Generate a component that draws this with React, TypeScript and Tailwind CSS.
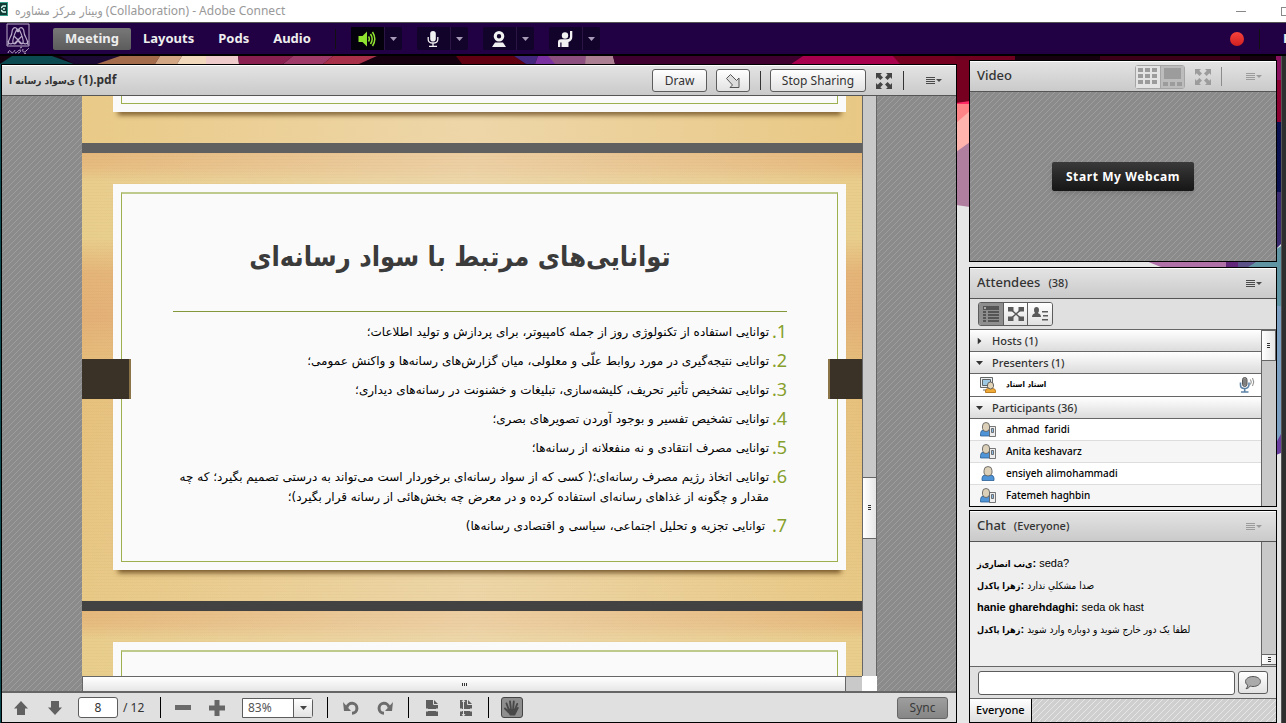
import React from 'react';
import clsx from 'clsx';

const STRIPES =
  'bg-[#8b8b8b] bg-[linear-gradient(135deg,transparent_4%,#9d9d9d_4%_12%,transparent_12%_54%,#9d9d9d_54%_62%,transparent_62%)] bg-size-[6px_6px]';
const HEADER = 'bg-linear-to-b from-[#e3e3e3] to-[#cacaca]';
const BUTTON =
  'flex items-center justify-center rounded-[3px] border border-[#5c5c5c] bg-linear-to-b from-white to-[#e2e2e2] text-[#333]';
const PERSIAN = "font-['DejaVu_Sans_Condensed','DejaVu_Sans',sans-serif]";

const points = [
  'توانایی استفاده از تکنولوژی روز از جمله کامپیوتر، برای پردازش و تولید اطلاعات؛',
  'توانایی نتیجه‌گیری در مورد روابط علّی و معلولی، میان گزارش‌های رسانه‌ها و واکنش عمومی؛',
  'توانایی تشخیص تأثیر تحریف، کلیشه‌سازی، تبلیغات و خشنونت در رسانه‌های دیداری؛',
  'توانایی تشخیص تفسیر و بوجود آوردن تصویرهای بصری؛',
  'توانایی مصرف انتقادی و نه منفعلانه از رسانه‌ها؛',
  'توانایی اتخاذ رژیم مصرف رسانه‌ای؛( کسی که از سواد رسانه‌ای برخوردار است می‌تواند به درستی تصمیم بگیرد؛ که چه\nمقدار و چگونه از غذاهای رسانه‌ای استفاده کرده و در معرض چه بخش‌هائی از رسانه قرار بگیرد)؛',
  ' توانایی تجزیه و تحلیل اجتماعی، سیاسی و اقتصادی رسانه‌ها)',
];

const participants = [
  { name: 'ahmad  faridi', mobile: true },
  { name: 'Anita keshavarz', mobile: true },
  { name: 'ensiyeh alimohammadi', mobile: false },
  { name: 'Fatemeh haghbin', mobile: true },
];

const messages = [
  { from: 'ی‌نب انصاری‌ز', text: 'seda?', persianName: true, persianText: false },
  { from: 'زهرا پاکدل', text: 'صدا مشکلي ندارد', persianName: true, persianText: true },
  { from: 'hanie gharehdaghi', text: 'seda ok hast', persianName: false, persianText: false },
  { from: 'زهرا پاکدل', text: 'لطفا یک دور خارج شوید و دوباره وارد شوید', persianName: true, persianText: true },
];

/* ---------- icons ---------- */

const Caret = ({ className }: { className?: string }) => (
  <svg viewBox="0 0 7 4" className={clsx('h-1 w-[7px]', className)} fill="currentColor" aria-hidden="true">
    <path d="M0 0h7L3.500 4z" />
  </svg>
);

const MenuLines = () => (
  <svg viewBox="0 0 16 8" className="h-2 w-4" fill="currentColor" aria-hidden="true" shapeRendering="crispEdges">
    <path d="M0 0h9v1H0zM0 2h9v1H0zM0 4h9v1H0zM0 6h9v1H0z" />
    <path d="M10 2h6l-3 3z" shapeRendering="auto" />
  </svg>
);

const Expand = () => (
  <svg viewBox="0 0 16 16" className="size-4" fill="currentColor" aria-hidden="true">
    <path d="M0 0h6L4.300 1.700 7 4.400 4.400 7 1.700 4.300 0 6zM16 0v6l-1.700-1.700L11.600 7 9 4.400l2.700-2.700L10 0zM0 16v-6l1.700 1.700L4.400 9 7 11.600l-2.700 2.700L6 16zM16 16h-6l1.700-1.700L9 11.600 11.600 9l2.700 2.700L16 10z" />
  </svg>
);

const Logo = () => (
  <svg viewBox="0 0 26 32" className="h-8 w-[26px]" fill="none" stroke="#b9abc9" strokeWidth="1.200" aria-hidden="true">
    <path d="M2 1h22v22H2z" strokeWidth="1" />
    <path d="M3 22c0-7 4-8 4-13 0-3 2-5 4-4s2 3 1 4M23 22c0-7-4-8-4-13 0-3-2-5-4-4s-2 3-1 4M12 6C9 12 7 16 8 20c2 2 4 0 5-3 1 3 3 5 5 3 1-4-1-8-4-14M8 20c-3 2-5 0-5-2M18 20c3 2 5 0 5-2M9 13l8 8M17 13l-8 8" />
    <path d="M3 30c1-3 2-3 3-1s3 0 4-2m0 3c2 0 3-3 5-3s0 3-2 3m5-4c-1 3 1 4 3 2s2-2 3-3M15 25l2-1M19 31l2-1" strokeWidth="1" />
  </svg>
);

const Speaker = () => (
  <svg viewBox="0 0 18 16" className="h-4 w-[18px]" fill="none" stroke="#8fe330" strokeWidth="1.500" aria-hidden="true">
    <path d="M.5 5h4L9 .5v15L4.500 11h-4z" fill="#8fe330" stroke="none" />
    <path d="M10.500 5.500q1.700 2.500 0 5M12.500 3q3.400 5 0 10M14.500 1q4.600 7 0 14" />
  </svg>
);

const Mic = () => (
  <svg viewBox="0 0 12 16" className="h-4 w-3" fill="none" stroke="#f1f1f1" strokeWidth="1.300" aria-hidden="true">
    <rect x="3.200" y="0" width="5.600" height="10.500" rx="2.800" fill="#f1f1f1" stroke="none" />
    <path d="M1.200 6v2.500q0 3.500 4.800 3.500t4.800-3.500V6M6 12v3M2 15.300h8" />
  </svg>
);

const Webcam = () => (
  <svg viewBox="0 0 14 16" className="h-4 w-3.5" fill="#f1f1f1" aria-hidden="true">
    <path fillRule="evenodd" d="M7 0a5.300 5.300 0 1 0 0 10.600A5.300 5.300 0 0 0 7 0m0 3.100a2.200 2.200 0 1 1 0 4.400 2.200 2.200 0 0 1 0-4.400" />
    <path d="M3 11.500h8l3 4.500H0z" />
  </svg>
);

const RaiseHand = () => (
  <svg viewBox="0 0 15 16" className="h-4 w-[15px]" fill="#f1f1f1" aria-hidden="true">
    <circle cx="7" cy="4.500" r="3.200" />
    <path d="M0 16v-5q0-2.800 3-2.800h6q2.800 0 3-2.200V0h2.300v6q0 3.500-3.800 5v5H3.500v-4.500H2.300V16z" />
  </svg>
);

const ArrowUp = ({ className }: { className?: string }) => (
  <svg viewBox="0 0 14 14" className={clsx('size-3.5', className)} fill="#616161" aria-hidden="true">
    <path d="M7 0l7 7.500h-3V14H3V7.500H0z" />
  </svg>
);

const Turn = ({ className }: { className?: string }) => (
  <svg viewBox="0 0 16 14" className={clsx('h-3.5 w-4', className)} fill="none" aria-hidden="true">
    <path d="M4 6.500A5 5 0 1 1 9 12.300" stroke="#6c6c6c" strokeWidth="3" />
    <path d="M0 1l1 9h7z" fill="#6c6c6c" />
  </svg>
);

const PageFit = ({ both }: { both?: boolean }) => (
  <svg viewBox="0 0 14 16" className="h-4 w-3.5" aria-hidden="true">
    <path d="M1 0h8l4 4v5H1zM1 11h12v5H1z" fill="#5e5e5e" />
    <path d="M8.500 0v4.500H13" fill="none" stroke="#e0e0e0" />
    <path d="M0 10h14M2.500 8L.5 10l2 2M11.500 8l2 2-2 2" fill="none" stroke="#e0e0e0" />
    {both && <path d="M4.500 0v16M3 2l1.500-2L6 2M3 14l1.500 2L6 14" fill="none" stroke="#e0e0e0" />}
  </svg>
);

const Hand = () => (
  <svg viewBox="0 0 16 16" className="size-4" fill="none" stroke="#484848" strokeLinecap="round" aria-hidden="true">
    <path d="M4.500 9L2.500 3.500M6.800 8L6 1.500M9.200 8l.6-6.500M11.200 9l2-5M4.500 12L1 8.500" strokeWidth="1.900" />
    <path d="M4 8.500h8l1.500-1.500 1.500.500-2.500 5-1.500 3H6L3 11z" fill="#484848" stroke="none" />
  </svg>
);

const Person = ({ mobile }: { mobile?: boolean }) => (
  <svg viewBox="0 0 16 16" className="size-4" stroke="#555" strokeWidth=".8" aria-hidden="true">
    {mobile ? (
      <>
        <path d="M.5 14v-2.500Q.5 8 4 8h4q2.500 0 2.500 3v3z" fill="#4f94d6" stroke="#2c5f96" />
        <path d="M2.500 4q0-3.500 3.500-3.500T9.500 4v2.500Q9 9.500 6 9.500T2.500 6.500z" fill="#dcd0b8" />
        <path d="M9.500 4.500h6v10h-6z" fill="#eee" />
        <path d="M11.500 6.500h2v4h-2z" fill="#8fbde6" />
      </>
    ) : (
      <>
        <path d="M2 14.500V12q0-3 4-3h4q4 0 4 3v2.500z" fill="#4f94d6" stroke="#2c5f96" />
        <path d="M4 4.500q0-4 4-4t4 4v2.500q-.5 3-4 3t-4-3z" fill="#dcd0b8" />
      </>
    )}
  </svg>
);

const Presenter = () => (
  <svg viewBox="0 0 16 16" className="size-4" stroke="#555" strokeWidth=".9" aria-hidden="true">
    <path d="M.5.500h12v10H.5z" fill="#e8eef2" />
    <path d="M2.500 2.500h8v6h-8z" fill="#9cc8e4" />
    <path d="M3 13h5" />
    <path d="M5.500 15.500V14q0-2.500 3-2.500h4q3 0 3 2.500v1.500z" fill="#f0aa38" stroke="#b57414" />
    <path d="M7.500 8q0-3 3-3t3 3v1.500q-.5 2.500-3 2.500t-3-2.500z" fill="#e3d4b8" />
  </svg>
);

const LiveMic = () => (
  <svg viewBox="0 0 16 16" className="size-4" fill="none" stroke="#555" aria-hidden="true">
    <path d="M1.500 5.500V8q0 3.500 4 3.500T10 8V5.500M5.700 11.500v3M2 15h7.500" stroke="#5b83a8" strokeWidth="1.600" />
    <rect x="3.500" y=".5" width="4.500" height="9" rx="2.200" fill="#999" />
    <path d="M4 3h3.500M4 5h3.500M4 7h3.500" strokeWidth=".7" />
    <path d="M11.500 2.500q1.500 2.500 0 5M13.500 1q2.500 4 0 8" stroke="#888" />
  </svg>
);

/* ---------- shared pieces ---------- */

const Divider = ({ className }: { className?: string }) => <span className={clsx('w-px', className)} />;

interface PodProps {
  title: React.ReactNode;
  actions?: React.ReactNode;
  className?: string;
  children: React.ReactNode;
}

const Pod = ({ title, actions, className, children }: PodProps) => (
  <section className={clsx('flex min-h-0 flex-col border border-black bg-[#e0e0e0]', className)}>
    <header className={clsx('flex h-[31px] shrink-0 items-center border-t border-b border-t-white border-b-[#555] pl-[7px] pr-3.5', HEADER)}>
      <h2 className="flex flex-1 items-center gap-2 whitespace-nowrap pb-px text-[13px] font-medium text-[#333]">{title}</h2>
      {actions}
    </header>
    {children}
  </section>
);

const PodMenu = ({ faded }: { faded?: boolean }) => (
  <button type="button" aria-label="Pod options" className={faded ? 'text-[#9c9c9c]' : 'text-[#4a4a4a]'}>
    <MenuLines />
  </button>
);

const Grip = ({ vertical }: { vertical?: boolean }) => (
  <span
    className={
      vertical
        ? 'h-[3px] w-[5px] bg-[repeating-linear-gradient(90deg,#333_0_1px,transparent_1px_2px)]'
        : 'h-[5px] w-[3px] bg-[repeating-linear-gradient(180deg,#333_0_1px,transparent_1px_2px)]'
    }
  />
);

const THUMB = 'flex items-center justify-center border border-[#666] bg-linear-to-r from-white to-[#e6e6e6]';

/* Faceted wallpaper that shows between the pods */
const Wallpaper = () => (
  <svg viewBox="0 0 1286 723" preserveAspectRatio="xMinYMin slice" className="absolute inset-0 size-full" aria-hidden="true">
    <path fill="#e6e6e6" d="M0 0h1286v723H0z" />
    <path fill="#14000f" d="M0 50h1286v14H0z" />
    <path fill="#0a4a50" d="M0 64l12-8h40l22 8v660H0z" />
    <path fill="#1c0a34" d="M60 56h60l-20 8H74z" />
    <path fill="#a56c4c" d="M120 56h40l-5 8H97z" />
    <path fill="#d3a684" d="M160 56h22l-5 8h-22z" />
    <path fill="#f3d9bb" d="M182 56h28l-4 8h-29z" />
    <path fill="#f0cbcb" d="M206 56h32l1 8h-33z" />
    <path fill="#8a2050" d="M238 56h55l-10 8h-44z" />
    <path fill="#a03a68" d="M293 56h40l-10 8h-40z" />
    <path fill="#a83048" d="M333 56h44l-18 8h-36z" />
    <path fill="#600010" d="M456 56h58l12 8h-64z" />
    <path fill="#43267e" d="M514 56h24l-3 8h-9z" />
    <path fill="#7a30a0" d="M538 56h20l20 8h-43z" />
    <path fill="#8c4f80" d="M548 56h40l-3 8h-30z" />
    <path fill="#ac8092" d="M586 56h27l2 8h-30z" />
    <path fill="#40002f" d="M613 56h190l-12 8H615z" />
    <path fill="#a8004c" d="M803 56h90l20 8H791z" />
    <path fill="#76001f" d="M893 56h76v52h-14v-44h-55z" />
    <path fill="#700020" d="M955 56h60v4h-60z" />
    <path fill="#3c0018" d="M1100 56h140v4h-140z" />
    <path fill="#ff2a63" d="M956 103l14-2v3l-14 4z" />
    <path fill="#ff8488" d="M956 104h14v9l-14 12z" />
    <path fill="#ffb3ac" d="M956 123l14-12v32l-8 8h-6z" />
    <path fill="#b07fa0" d="M956 152l14-10v65l-14-2z" />
    <path fill="#8a1060" d="M1276 56h5v40h-5z" />
    <path fill="#8a0030" d="M1276 80h5v43l-5-1z" />
    <path fill="#0a1050" d="M1276 122h5v70h-5z" />
    <path fill="#3a2a70" d="M1276 192h5v52l-5 5z" />
    <path fill="#b070a8" d="M1146 261h90v6h-75z" />
    <path fill="#62267a" d="M1226 261h12v6h-12z" />
    <path fill="#5c5088" d="M1238 261h20l-8 6h-12z" />
    <path fill="#5f95a3" d="M1258 261l23-15v60h-5v-39h-28z" />
    <path fill="#7a9fc0" d="M1276 306h5v130l-5 10z" />
    <path fill="#6a3fa0" d="M1276 443l5-9v19l-5 2z" />
  </svg>
);

const MenuItem = ({ label, active }: { label: string; active?: boolean }) => (
  <button
    type="button"
    className={clsx(
      'h-[22px] rounded-xs px-3 text-[13px] font-bold text-[#eee]',
      active && 'bg-linear-to-b from-[#787878] to-[#5c5c5c]'
    )}
  >
    {label}
  </button>
);

const DeviceButton = ({ label, dark, children }: { label: string; dark?: boolean; children: React.ReactNode }) => (
  <div className="flex h-[23px] w-[51px] rounded-xs bg-[#12032a]">
    <button type="button" aria-label={label} className={clsx('flex flex-1 items-center justify-center', dark && 'bg-[#05010c]')}>
      {children}
    </button>
    <button
      type="button"
      aria-label={`${label} options`}
      className="flex w-[18px] items-center justify-center border-l border-[#2b1545] text-[#a79bb8]"
    >
      <Caret />
    </button>
  </div>
);

interface SlideProps {
  part?: 'top' | 'bottom';
  className?: string;
  children?: React.ReactNode;
}

/* A wood-backed page; `part` shows only one cut edge of it */
const Slide = ({ part, className, children }: SlideProps) => (
  <div
    className={clsx(
      'relative flex flex-col pl-[31px] pr-4',
      part !== 'bottom' &&
        'bg-[repeating-linear-gradient(180deg,rgba(170,110,40,0.04)_0_1px,transparent_1px_3px),linear-gradient(90deg,transparent,rgba(240,222,190,0.6)_50%,transparent),linear-gradient(180deg,#e5b77b_0,#e6bc80_14px,#e8cd8c_28px,#e8ce8c_85px,#e4b477_120px,#e3b076_165px,#e6c07c_220px,#e8c986_100%)] pt-[31px]',
      part === 'bottom' && 'bg-[linear-gradient(90deg,#e9ca87,#eed6a9_50%,#e8c884)]',
      part !== 'top' && 'pb-[31px]',
      className
    )}
  >
    <div
      className={clsx(
        'flex flex-1 flex-col bg-[#fafafa] px-2',
        part !== 'bottom' && 'pt-2',
        part !== 'top' && 'pb-2 shadow-[0_8px_5px_-5px_rgba(80,50,10,0.75)]'
      )}
    >
      <div
        className={clsx(
          'flex-1 border-x border-[#9db04f]',
          part !== 'bottom' && 'border-t-2 border-t-[#bdca8c]',
          part !== 'top' && 'border-b'
        )}
      >
        {children}
      </div>
    </div>
  </div>
);

/* ---------- pods ---------- */

const SharePod = () => (
  <Pod
    className="mt-2 flex-1"
    title={
      <span className="text-xs font-bold">
        <bdi className={clsx(PERSIAN, 'text-[10px]')}>ی‌سواد رسانه ا</bdi> (1).pdf
      </span>
    }
    actions={
      <div className="flex items-center">
        <button type="button" className={clsx(BUTTON, 'h-[23px] w-[55px] text-xs')}>Draw</button>
        <button type="button" aria-label="Pointer" className={clsx(BUTTON, 'ml-[9px] h-[23px] w-[34px]')}>
          <svg viewBox="0 0 14 14" className="size-3.5" fill="#ddd" stroke="#555" strokeLinejoin="round" aria-hidden="true">
            <path d="M.5 4.500l4-4 6 6 2.500-2.500v9.500H4l2.500-2.500z" />
          </svg>
        </button>
        <Divider className="ml-2.5 h-[19px] bg-[#333]" />
        <button type="button" className={clsx(BUTTON, 'ml-[9px] h-[23px] w-24 text-xs')}>Stop Sharing</button>
        <button type="button" aria-label="Full screen" className="ml-2.5 text-[#444]"><Expand /></button>
        <Divider className="ml-[11px] mr-[22px] h-[19px] bg-[#333]" />
        <PodMenu />
      </div>
    }
  >
    <div className={clsx('flex min-h-0 flex-1 pl-20 pr-[79px]', STRIPES)}>
      <div className="flex min-w-0 flex-1 flex-col">
        <div className="flex min-h-0 flex-1 flex-col overflow-hidden bg-[#424242]">
          <Slide part="bottom">
            <div className="h-[7px]" />
          </Slide>
          <div className="h-2.5 shrink-0 bg-[#606060]" />
          <Slide className="mb-2.5">
            <div className="pl-[51px] pr-[50px] pb-[25px]">
              <h1
                dir="rtl"
                className={clsx(
                  'border-b border-[#84973a] pt-[33px] pr-10 pb-6 text-center text-[27px] leading-[60px] font-bold text-[#3b3b3b]',
                  PERSIAN
                )}
              >
                توانایی‌های مرتبط با سواد رسانه‌ای
              </h1>
              <ol dir="rtl" className="mt-2.5 flex flex-col gap-[9px] font-['DejaVu_Sans',sans-serif]">
                {points.map((point, i) => (
                  <li key={point} className="flex gap-0.5 text-xs leading-5 text-black">
                    <span className="w-4 font-['Noto_Sans',sans-serif] text-lg leading-[18px] text-[#86a02c]">
                      <bdi dir="ltr">.{i + 1}</bdi>
                    </span>
                    <span className="whitespace-pre">{point}</span>
                  </li>
                ))}
              </ol>
            </div>
            <span className="absolute top-[206px] left-0 h-10 w-[49px] border-r-2 border-[#8b7448] bg-[#3a3226]" />
            <span className="absolute top-[206px] right-0 h-10 w-[34px] border-l-2 border-[#8b7448] bg-[#3a3226]" />
          </Slide>
          <Slide part="top" className="flex-1" />
        </div>
        <div className="flex h-[15px] shrink-0 border-t border-[#666] bg-[#c9c9c9]">
          <span className="flex flex-1 items-center justify-center border-x border-[#666] bg-linear-to-b from-white to-[#e6e6e6]">
            <Grip vertical />
          </span>
          <span className="w-4" />
        </div>
      </div>
      <div className="flex w-[15px] flex-col">
        <div className="flex flex-1 flex-col border-x border-[#666] bg-[#c9c9c9]">
          <span className="flex-[382]" />
          <span className={clsx(THUMB, 'h-[62px] border-x-0')}><Grip /></span>
          <span className="flex-[138]" />
        </div>
        <span className="h-[15px] bg-white" />
      </div>
    </div>

    <div className="flex h-[31px] shrink-0 items-center border-t-2 border-[#666] pl-3 pr-2 text-xs text-[#333]">
      <button type="button" aria-label="Previous page"><ArrowUp /></button>
      <button type="button" aria-label="Next page" className="ml-5"><ArrowUp className="rotate-180" /></button>
      <input
        aria-label="Page"
        defaultValue="8"
        className="ml-4 h-[21px] w-10 rounded-[3px] border border-[#5c5c5c] bg-white text-center text-xs"
      />
      <span className="ml-[5px] w-[37px]">/ 12</span>
      <Divider className="h-[21px] bg-black" />
      <button type="button" aria-label="Zoom out" className="ml-3.5">
        <span className="block h-[5px] w-4 bg-[#6a6a6a]" />
      </button>
      <button type="button" aria-label="Zoom in" className="ml-[18px]">
        <svg viewBox="0 0 16 16" className="size-4" fill="#666" aria-hidden="true"><path d="M5.500 0h5v5.500H16v5h-5.500V16h-5v-5.500H0v-5h5.500z" /></svg>
      </button>
      <div className="relative ml-[17px] h-5 w-[71px]">
        <select aria-label="Zoom" className="size-full appearance-none rounded-r-[3px] border border-[#5c5c5c] bg-white pl-[5px] text-xs text-[#555]">
          <option>83%</option>
        </select>
        <span className="pointer-events-none absolute inset-y-px right-px flex w-[19px] items-center justify-center border-l border-[#5c5c5c] bg-linear-to-b from-white to-[#e2e2e2] text-[#444]">
          <Caret />
        </span>
      </div>
      <Divider className="ml-3.5 h-[21px] bg-black" />
      <button type="button" aria-label="Rotate left" className="ml-[15px]"><Turn /></button>
      <button type="button" aria-label="Rotate right" className="ml-[18px]"><Turn className="-scale-x-100" /></button>
      <Divider className="ml-[15px] h-[21px] bg-black" />
      <button type="button" aria-label="Fit width" className="ml-4"><PageFit /></button>
      <button type="button" aria-label="Fit page" className="ml-5"><PageFit both /></button>
      <Divider className="ml-[15px] h-[21px] bg-black" />
      <button type="button" aria-label="Pan" className="ml-3 flex h-[21px] w-[22px] items-center justify-center rounded-[3px] border border-[#444] bg-[#8e8e8e]">
        <Hand />
      </button>
      <button type="button" className="ml-auto h-[22px] w-[51px] rounded-[3px] border border-[#666] bg-linear-to-b from-[#9e9e9e] to-[#868686] text-xs text-[#3a3a3a]">
        Sync
      </button>
    </div>
  </Pod>
);

const VideoPod = () => (
  <Pod
    className="h-[202px] shrink-0"
    title="Video"
    actions={
      <div className="flex items-center text-[#9c9c9c]">
        <div className="flex h-6 w-[50px] rounded-[3px] border border-[#a5a5a5]">
          <button type="button" aria-label="Grid view" className="flex flex-1 items-center justify-center bg-[#e4e4e4]">
            <svg viewBox="0 0 19 17" className="h-[17px] w-[19px]" fill="currentColor" aria-hidden="true">
              <path d="M0 0h5v4H0zM7 0h5v4H7zM14 0h5v4h-5zM0 6h5v4H0zM7 6h5v4H7zM14 6h5v4h-5zM0 12h5v4H0zM7 12h5v4H7zM14 12h5v4h-5z" />
            </svg>
          </button>
          <button type="button" aria-label="Filmstrip view" className="flex flex-1 items-center justify-center border-l border-[#a5a5a5] bg-[#bcbcbc]">
            <svg viewBox="0 0 19 18" className="h-[18px] w-[19px]" fill="currentColor" aria-hidden="true">
              <path d="M1 0h17v11H1zM0 14h5v4H0zM7 14h5v4H7zM14 14h5v4h-5z" />
            </svg>
          </button>
        </div>
        <button type="button" aria-label="Full screen" className="ml-2.5"><Expand /></button>
        <Divider className="ml-2.5 mr-6 h-[19px] bg-[#8c8c8c]" />
        <PodMenu faded />
      </div>
    }
  >
    <div className={clsx('flex flex-1 items-center justify-center', STRIPES)}>
      <button type="button" className="h-[29px] rounded-xs bg-linear-to-b from-[#3a3a3a] to-[#161616] px-3.5 text-xs font-bold tracking-wider text-white shadow-md">
        Start My Webcam
      </button>
    </div>
  </Pod>
);

const GroupRow = ({ label, open }: { label: string; open?: boolean }) => (
  <h3 className="h-[22px] border-b border-[#666] bg-linear-to-b from-white to-[#dcdcdc]">
    <button type="button" className="flex size-full items-center gap-[9px] pt-px pl-1.5 text-[11px] font-medium text-[#333]">
      <Caret className={clsx(!open && '-rotate-90')} />
      {label}
    </button>
  </h3>
);

const AttendeesPod = () => (
  <Pod
    className="mt-[5px] h-60 shrink-0"
    title={<>Attendees <span className="text-[11px]">(38)</span></>}
    actions={<PodMenu />}
  >
    <div className="flex h-[31px] shrink-0 items-center border-b border-[#666] pl-2">
      <div className="flex h-6 w-[75px] divide-x divide-[#5c5c5c] overflow-hidden rounded-[3px] border border-[#5c5c5c]">
        <button type="button" aria-label="Attendee view" className="flex flex-1 items-center justify-center bg-[#8e8e8e]">
          <svg viewBox="0 0 16 16" className="size-4" fill="#555" shapeRendering="crispEdges" aria-hidden="true">
            <path d="M0 0h16v4H0zM0 5h3v2H0zM5 5h11v2H5zM0 8h3v2H0zM5 8h11v2H5zM0 11h3v2H0zM5 11h11v2H5zM0 14h3v2H0zM5 14h11v2H5z" />
            <path d="M1 1h2v2H1z" fill="#aaa" />
          </svg>
        </button>
        <button type="button" aria-label="Breakout room view" className="flex flex-1 items-center justify-center bg-linear-to-b from-white to-[#e0e0e0]">
          <svg viewBox="0 0 16 14" className="h-3.5 w-4" fill="#5a5a5a" stroke="#5a5a5a" aria-hidden="true">
            <path d="M0 0h5v4H0zM11 0h5v4h-5zM0 10h5v4H0zM11 10h5v4h-5z" />
            <path d="M4 3.500l8 7M12 3.500l-8 7" strokeWidth="1.500" />
          </svg>
        </button>
        <button type="button" aria-label="Attendee status view" className="flex flex-1 items-center justify-center bg-linear-to-b from-white to-[#e0e0e0]">
          <svg viewBox="0 0 17 14" className="h-3.5 w-[17px]" fill="#5a5a5a" aria-hidden="true">
            <path d="M4.500 0Q7 0 7 3T5.800 6Q9 7 9 10H0q0-3 3.200-4Q2 6 2 3t2.500-3M10 4h6v1.500h-6zM11 8h5v1.500h-5zM10 12h6v1.500h-6z" />
          </svg>
        </button>
      </div>
    </div>
    <div className="flex min-h-0 flex-1">
      <div className="min-w-0 flex-1 overflow-hidden bg-white">
        <GroupRow label="Hosts (1)" />
        <GroupRow label="Presenters (1)" open />
        <div className="flex h-[23px] items-center border-b border-[#666] pl-2.5 pr-1.5 font-bold text-black">
          <Presenter />
          <span className={clsx(PERSIAN, 'ml-2.5 flex-1 text-[8px]')}>استاد استاد</span>
          <LiveMic />
        </div>
        <GroupRow label="Participants (36)" open />
        <ul>
          {participants.map((person) => (
            <li
              key={person.name}
              className="flex h-[22px] items-center gap-2.5 border-b border-[#ddd] pl-2.5 text-[10px] font-medium whitespace-pre text-black even:bg-[#f6f6f6]"
            >
              <Person mobile={person.mobile} />
              {person.name}
            </li>
          ))}
        </ul>
      </div>
      <div className="w-[15px] border-l border-[#666] bg-[#c9c9c9]">
        <span className={clsx(THUMB, 'h-[31px] border-l-0')}><Grip /></span>
      </div>
    </div>
  </Pod>
);

const ChatPod = () => (
  <Pod
    className="mt-[3px] flex-1"
    title={<>Chat <span className="text-[11px]">(Everyone)</span></>}
    actions={<PodMenu faded />}
  >
    <div className="flex min-h-0 flex-1 bg-[#efefef]">
      <ul className="flex-1 overflow-hidden pt-2.5 pl-[7px] font-['Liberation_Sans','DejaVu_Sans',sans-serif] text-[11px] leading-[22px] text-black">
        {messages.map((message) => (
          <li key={message.text} className="h-[22px] whitespace-nowrap">
            <b><bdi className={clsx(message.persianName && [PERSIAN, 'text-[9px]'])}>{message.from}</bdi>:</b>{' '}
            <bdi className={clsx(message.persianText && [PERSIAN, 'text-[10px]'])}>{message.text}</bdi>
          </li>
        ))}
      </ul>
      <div className="flex w-[15px] flex-col justify-end border-l border-[#666] bg-[#c9c9c9]">
        <span className={clsx(THUMB, 'mb-px h-[11px] border-x-0')}><Grip /></span>
      </div>
    </div>
    <form className="flex h-8 shrink-0 items-center gap-[3px] border-t border-[#666] px-2">
      <input aria-label="Message" className="h-6 min-w-0 flex-1 rounded-[3px] border border-[#5c5c5c] bg-white px-2 text-xs" />
      <button type="button" aria-label="Send" className={clsx(BUTTON, 'h-[23px] w-[30px]')}>
        <svg viewBox="0 0 16 14" className="h-3.5 w-4" fill="#aaa" stroke="#555" aria-hidden="true">
          <path d="M8 .5c4.200 0 7.500 2.200 7.500 5s-3.300 5-7.500 5q-1.500 0-2.800-.4Q3.500 12.500 1 12.800q1.700-1.500 1.600-3.600Q.5 7.700.5 5.500C.5 2.700 3.800.5 8 .5z" />
        </svg>
      </button>
    </form>
    <div className="flex h-6 shrink-0 border-t border-[#666] bg-[#cfcfcf] bg-[linear-gradient(135deg,transparent_4%,#e6e6e6_4%_12%,transparent_12%_54%,#e6e6e6_54%_62%,transparent_62%)] bg-size-[6px_6px]">
      <button type="button" className="border-r border-black bg-linear-to-b from-white to-[#dedede] px-1.5 text-[11px] font-medium text-black">
        Everyone
      </button>
    </div>
  </Pod>
);

const App: React.FC = () => (
  <div className="relative flex h-screen flex-col overflow-hidden font-['Noto_Sans','DejaVu_Sans',sans-serif]">
    <Wallpaper />

    {/* Window title */}
    <div className="relative flex h-[22px] shrink-0 items-center gap-[7px] overflow-hidden bg-white text-xs whitespace-nowrap text-[#999]">
      <span className="mb-1 flex h-3.5 w-2 justify-end overflow-hidden border border-l-0 border-[#35a08c] bg-[#123a35]">
        <svg viewBox="0 0 6 12" className="h-3 w-1.5" fill="none" stroke="#d8fff5" aria-hidden="true">
          <path d="M5 3H2L0 5M5 9H2L0 7M2 6h2" strokeWidth="1.500" />
        </svg>
      </span>
      <span><bdi className={PERSIAN}>وبینار مرکز مشاوره</bdi> (Collaboration) - Adobe Connect</span>
      <button type="button" aria-label="Minimize" className="ml-auto mr-7 h-px w-2.5 bg-[#888]" />
      <button type="button" aria-label="Maximize" className="-mr-1 size-[9px] border border-[#888]" />
    </div>

    {/* Menu bar */}
    <nav className="relative flex h-[34px] shrink-0 items-center overflow-hidden border-t border-b-2 border-t-[#555] border-b-black bg-[#210043] pl-[5px]">
      <Logo />
      <div className="ml-[22px] flex">
        <MenuItem label="Meeting" active />
        <MenuItem label="Layouts" />
        <MenuItem label="Pods" />
        <MenuItem label="Audio" />
      </div>
      <Divider className="ml-3 h-5 bg-[#111]" />
      <div className="ml-[15px] flex gap-[15px]">
        <DeviceButton label="Speaker" dark><Speaker /></DeviceButton>
        <DeviceButton label="Microphone"><Mic /></DeviceButton>
        <DeviceButton label="Webcam"><Webcam /></DeviceButton>
        <DeviceButton label="Raise hand"><RaiseHand /></DeviceButton>
      </div>
      <span role="img" aria-label="Recording" className="ml-auto size-3.5 rounded-full bg-linear-to-b from-[#f8423c] to-[#cf1f1f]" />
      <Divider className="ml-[15px] h-5 bg-[#111]" />
      <span className="ml-[23px] w-[3px] overflow-hidden text-[13px] font-bold text-[#eee]">H</span>
    </nav>

    <main className="relative flex min-h-0 flex-1 pl-px">
      <SharePod />
      <div className="ml-3 flex w-[308px] shrink-0 flex-col pt-1">
        <VideoPod />
        <AttendeesPod />
        <ChatPod />
      </div>
      <aside className="ml-1 w-[5px] border-l border-[#555] bg-[#2e2e2e]" />
    </main>
  </div>
);

export default App;
